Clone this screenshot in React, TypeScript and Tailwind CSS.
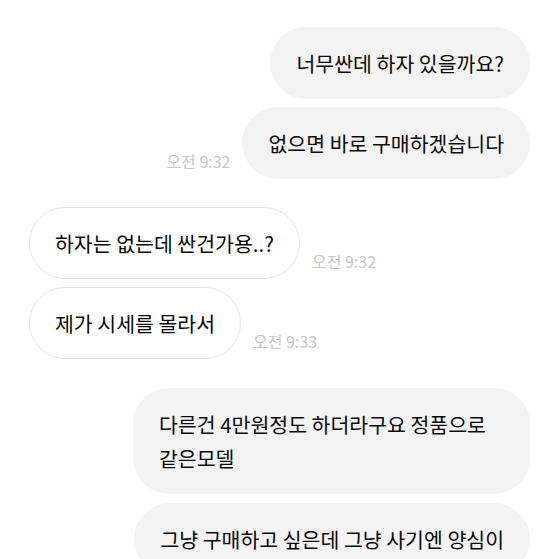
import React from "react";

type Msg = { me: boolean; text: string; time?: string; gapTop: string };

const messages: Msg[] = [
  { me: true, text: "너무싼데 하자 있을까요?", gapTop: "mt-0" },
  { me: true, text: "없으면 바로 구매하겠습니다", time: "오전 9:32", gapTop: "mt-2" },
  { me: false, text: "하자는 없는데 싼건가용..?", time: "오전 9:32", gapTop: "mt-7" },
  { me: false, text: "제가 시세를 몰라서", time: "오전 9:33", gapTop: "mt-2" },
  { me: true, text: "다른건 4만원정도 하더라구요 정품으로 같은모델", gapTop: "mt-[29px]" },
  { me: true, text: "그냥 구매하고 싶은데 그냥 사기엔 양심이", gapTop: "mt-[9px]" },
];

function Bubble({ m }: { m: Msg }) {
  const bubble = m.me
    ? "bg-[#f3f3f3] border border-[#f3f3f3]"
    : "bg-white border border-[#e4e4e4]";
  return (
    <div className={`flex items-end gap-[12px] ${m.gapTop} ${m.me ? "flex-row-reverse" : "flex-row"}`}>
      <div
        className={`${bubble} rounded-[36px] px-[25px] py-[18px] max-w-[397px] text-[20.5px] leading-[34px] text-[#0a0a0a]`}
      >
        {m.text}
      </div>
      {m.time && (
        <span className="text-[16px] leading-[20px] text-[#c6c6c6] pb-[8px] whitespace-nowrap">
          {m.time}
        </span>
      )}
    </div>
  );
}

export default function App() {
  return (
    <div
      className="w-[559px] h-[559px] overflow-hidden bg-white pt-[27px] px-[29px]"
      style={{ fontFamily: '"Noto Sans CJK KR", "Noto Sans", sans-serif' }}
    >
      <div className="flex flex-col">
        {messages.map((m, i) => (
          <Bubble key={i} m={m} />
        ))}
      </div>
    </div>
  );
}
